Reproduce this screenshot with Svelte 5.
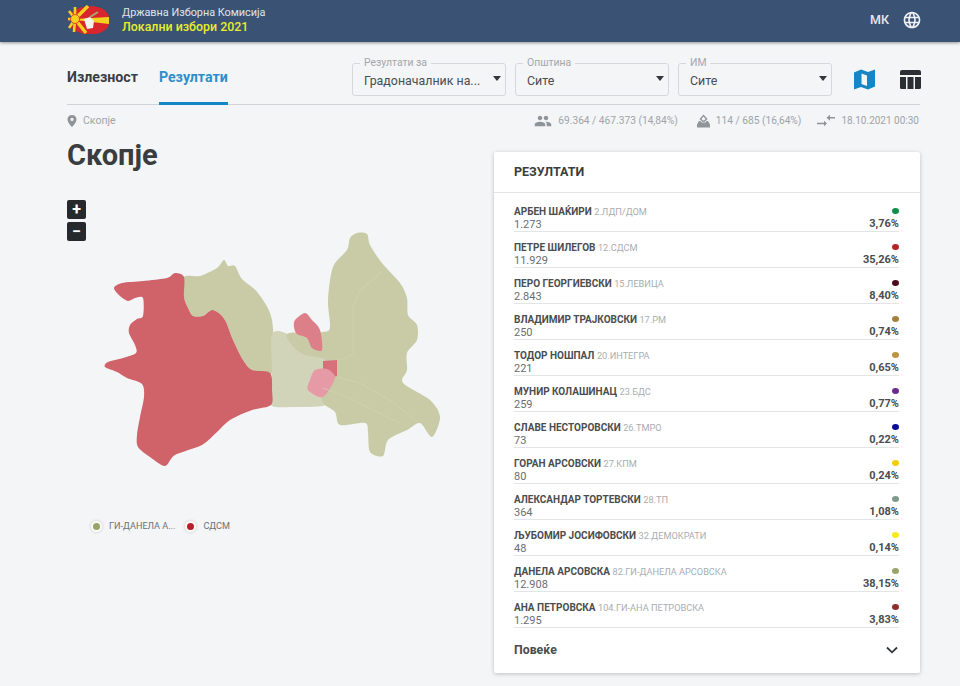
<script>
	const selects = [
		{ label: 'Резултати за', value: 'Градоначалник на...' },
		{ label: 'Општина', value: 'Сите' },
		{ label: 'ИМ', value: 'Сите' }
	];

	const candidates = [
		{ name: 'АРБЕН ШАЌИРИ', party: '2.ЛДП/ДОМ', votes: '1.273', pct: '3,76%', color: '#0c8f4a' },
		{ name: 'ПЕТРЕ ШИЛЕГОВ', party: '12.СДСМ', votes: '11.929', pct: '35,26%', color: '#b8202a' },
		{ name: 'ПЕРО ГЕОРГИЕВСКИ', party: '15.ЛЕВИЦА', votes: '2.843', pct: '8,40%', color: '#4d0a1c' },
		{ name: 'ВЛАДИМИР ТРАЈКОВСКИ', party: '17.РМ', votes: '250', pct: '0,74%', color: '#a3803f' },
		{ name: 'ТОДОР НОШПАЛ', party: '20.ИНТЕГРА', votes: '221', pct: '0,65%', color: '#bb9440' },
		{ name: 'МУНИР КОЛАШИНАЦ', party: '23.БДС', votes: '259', pct: '0,77%', color: '#6a2a8c' },
		{ name: 'СЛАВЕ НЕСТОРОВСКИ', party: '26.ТМРО', votes: '73', pct: '0,22%', color: '#0a0a9c' },
		{ name: 'ГОРАН АРСОВСКИ', party: '27.КПМ', votes: '80', pct: '0,24%', color: '#f2cd0c' },
		{ name: 'АЛЕКСАНДАР ТОРТЕВСКИ', party: '28.ТП', votes: '364', pct: '1,08%', color: '#7f9a8a' },
		{ name: 'ЉУБОМИР ЈОСИФОВСКИ', party: '32.ДЕМОКРАТИ', votes: '48', pct: '0,14%', color: '#f5e81c' },
		{ name: 'ДАНЕЛА АРСОВСКА', party: '82.ГИ-ДАНЕЛА АРСОВСКА', votes: '12.908', pct: '38,15%', color: '#98a46a' },
		{ name: 'АНА ПЕТРОВСКА', party: '104.ГИ-АНА ПЕТРОВСКА', votes: '1.295', pct: '3,83%', color: '#8a2f2a' }
	];

	const regions = [
		{
			fill: '#c9cba6',
			points: '184,277 200,276 217,268 224,260 228,266 235,266 242,279 258,293 272,320 272,373 252,370 243,360 233,340 226,322 220,314 212,310 203,316 193,316 188,308 184,297'
		},
		{ fill: '#c9cba6', points: '318,350 348,350 348,392 318,400', sharp: true },
		{
			fill: '#d2d4b9',
			points: '272,334 287,334 300,353 323,358 325,372 314,383 312,392 325,400 323,406 293,407 272,406 270,393 272,370'
		},
		{
			fill: '#c9cba6',
			points: '357,233 367,234 370,245 382,263 400,283 407,298 408,315 417,325 417,340 407,353 407,370 403,383 430,400 440,417 432,437 420,423 407,430 388,440 383,456 370,452 368,433 365,423 340,425 335,412 323,403 323,390 337,380 337,360 323,358 300,353 287,334 323,332 330,327 328,300 333,267 347,250 350,238'
		},
		{
			fill: '#d0636a',
			points: '114,288 122,283 143,281 167,278 175,273 184,277 184,297 188,308 193,316 203,316 212,310 220,314 226,322 233,340 243,360 252,370 270,373 272,390 271,405 252,410 230,420 217,432 202,445 175,455 165,466 150,457 138,447 137,435 140,417 144,397 142,384 127,378 117,372 105,367 108,362 123,358 136,353 135,345 129,333 130,325 137,319 143,316 143,298 135,298 128,301 120,296'
		},
		{ fill: '#dc7f88', points: '295,320 305,313 312,320 320,330 322,350 312,348 307,338 297,334 294,327' },
		{ fill: '#d8707c', points: '323,361 337,360 337,376 330,378 323,372', sharp: true },
		{ fill: '#e59aa5', points: '315,370 327,369 335,378 323,397 308,390 310,380' }
	];

	const seams = [
		'382,272 360,290 353,307 353,353 347,358 337,360',
		'337,377 360,383 393,402 417,422',
		'323,388 347,397 373,410 400,423'
	];

	const legend = [
		{ label: 'ГИ-ДАНЕЛА А...', color: '#98a46a' },
		{ label: 'СДСМ', color: '#b8202a' }
	];

	// closed catmull-rom through the traced outline points
	function smooth(points) {
		const p = points.split(' ').map((s) => s.split(',').map(Number));
		const n = p.length;
		let d = `M${p[0][0]} ${p[0][1]}`;
		for (let i = 0; i < n; i++) {
			const [a, b, c, e] = [p[(i + n - 1) % n], p[i], p[(i + 1) % n], p[(i + 2) % n]];
			const c1 = [b[0] + (c[0] - a[0]) / 7, b[1] + (c[1] - a[1]) / 7];
			const c2 = [c[0] - (e[0] - b[0]) / 7, c[1] - (e[1] - b[1]) / 7];
			d += `C${c1[0].toFixed(1)} ${c1[1].toFixed(1)} ${c2[0].toFixed(1)} ${c2[1].toFixed(1)} ${c[0]} ${c[1]}`;
		}
		return d + 'Z';
	}
</script>

<div class="page">
	<header class="topbar">
		<div class="brand">
			<svg class="logo" width="42" height="30" viewBox="0 0 42 30">
				<path d="M3 8 Q10 1 24 1 Q36 2 40 9 Q42 15 40 22 Q34 30 22 29 Q10 30 3 22 Z" fill="#d8262c" />
				<g stroke="#f6d21f" stroke-width="2.6">
					<path d="M7 14 L0 14" />
					<path d="M7 14 L1 6" />
					<path d="M7 14 L7 2" />
					<path d="M7 14 L20 1" stroke-width="3.4" />
					<path d="M7 14 L1 23" />
					<path d="M7 14 L6 27" />
					<path d="M7 14 L18 28" stroke-width="3.4" />
				</g>
				<path d="M7 14 L41 12 L41 19 L7 15 Z" fill="#f6d21f" />
				<circle cx="7" cy="14" r="4.5" fill="#f6d21f" stroke="#d8262c" stroke-width="0.8" />
				<path d="M16 14 L22 12 L26 16 L25 23 L19 24 Z" fill="#f4f1ea" />
				<path d="M22 12 L30 7" stroke="#a3ad74" stroke-width="2" />
			</svg>
			<div class="brand-text">
				<span class="org">Државна Изборна Комисија</span>
				<span class="election">Локални избори 2021</span>
			</div>
		</div>
		<div class="lang">
			<span>МК</span>
			<svg width="20" height="20" viewBox="0 0 24 24" fill="#eef1f5">
				<path d="M11.99 2C6.47 2 2 6.48 2 12s4.47 10 9.99 10C17.52 22 22 17.52 22 12S17.52 2 11.99 2zm6.93 6h-2.95c-.32-1.25-.78-2.45-1.38-3.56 1.84.63 3.37 1.91 4.33 3.56zM12 4.04c.83 1.2 1.48 2.53 1.91 3.96h-3.82c.43-1.43 1.08-2.76 1.91-3.96zM4.26 14C4.1 13.36 4 12.69 4 12s.1-1.36.26-2h3.38c-.08.66-.14 1.32-.14 2 0 .68.06 1.34.14 2H4.26zm.82 2h2.95c.32 1.25.78 2.45 1.38 3.56-1.84-.63-3.37-1.9-4.33-3.56zm2.95-8H5.08c.96-1.66 2.49-2.93 4.33-3.56C8.81 5.55 8.35 6.75 8.03 8zM12 19.96c-.83-1.2-1.48-2.53-1.91-3.96h3.82c-.43 1.43-1.08 2.76-1.91 3.96zM14.34 14H9.66c-.09-.66-.16-1.32-.16-2 0-.68.07-1.35.16-2h4.68c.09.65.16 1.32.16 2 0 .68-.07 1.34-.16 2zm.25 5.56c.6-1.11 1.06-2.31 1.38-3.56h2.95c-.96 1.65-2.49 2.93-4.33 3.56zM16.36 14c.08-.66.14-1.32.14-2 0-.68-.06-1.34-.14-2h3.38c.16.64.26 1.31.26 2s-.1 1.36-.26 2h-3.38z" />
			</svg>
		</div>
	</header>

	<main class="content">
		<div class="toolbar">
			<nav class="tabs">
				<span class="tab">Излезност</span>
				<span class="tab active">Резултати</span>
			</nav>
			<div class="filters">
				{#each selects as s}
					<div class="select">
						<span class="select-label">{s.label}</span>
						<span class="select-value">{s.value}</span>
						<span class="caret"></span>
					</div>
				{/each}
				<svg class="view-icon map-icon" width="21" height="21" viewBox="0 0 21 21" fill="#1487c9">
					<path d="M0 3.5 L7 0.5 L14 3 L21 0.5 L21 17.5 L14 20.5 L7 18 L0 20.5 Z M7.5 4.5 L7.5 15 L13 17 L13 6.5 Z" fill-rule="evenodd" />
				</svg>
				<svg class="view-icon table-icon" width="21" height="19" viewBox="0 0 21 19" fill="#2b2f33">
					<path d="M2 0 H19 Q21 0 21 2 V5 H0 V2 Q0 0 2 0 Z" />
					<path d="M0 7 H6 V19 H1.5 Q0 19 0 17.5 Z" />
					<rect x="7.5" y="7" width="6" height="12" />
					<path d="M15 7 H21 V17.5 Q21 19 19.5 19 H15 Z" />
				</svg>
			</div>
		</div>

		<div class="meta">
			<div class="crumb">
				<svg width="10" height="12" viewBox="0 0 10 12" fill="#8f9499">
					<path d="M5 0 C2.2 0 .5 2 .5 4.4 C.5 7.4 5 12 5 12 C5 12 9.5 7.4 9.5 4.4 C9.5 2 7.8 0 5 0 Z M5 6 A1.6 1.6 0 1 1 5 2.8 A1.6 1.6 0 0 1 5 6 Z" fill-rule="evenodd" />
				</svg>
				<span>Скопје</span>
			</div>
			<div class="stats">
				<div class="stat">
					<svg width="18" height="18" viewBox="0 0 24 24" fill="#8f9499">
						<path d="M16 11c1.66 0 2.99-1.34 2.99-3S17.66 5 16 5c-1.66 0-3 1.34-3 3s1.34 3 3 3zm-8 0c1.66 0 2.99-1.34 2.99-3S9.66 5 8 5C6.34 5 5 6.34 5 8s1.34 3 3 3zm0 2c-2.33 0-7 1.17-7 3.5V19h14v-2.5c0-2.33-4.67-3.5-7-3.5zm8 0c-.29 0-.62.02-.97.05 1.16.84 1.97 1.97 1.97 3.45V19h6v-2.5c0-2.33-4.67-3.5-7-3.5z" />
					</svg>
					<span>69.364 / 467.373 (14,84%)</span>
				</div>
				<div class="stat ballot">
					<svg width="13" height="14" viewBox="0 0 13 14" fill="#8f9499">
						<path d="M6.5 0.5 L10.5 5 L7.5 8 H5.5 L2.5 5 Z M6.5 2.4 L4.4 5 L6 6.6 H7 L8.6 5 Z" fill-rule="evenodd" />
						<path d="M2 7 H3.4 L4.6 8.6 H8.4 L9.6 7 H11 L13 10.5 V13.5 H0 V10.5 Z" />
					</svg>
					<span>114 / 685 (16,64%)</span>
				</div>
				<div class="stat">
					<svg width="18" height="13" viewBox="0 0 18 13" fill="#8f9499">
						<path d="M9.5 3.8 L13 0.8 V3 H18 V4.6 H13 V6.8 Z" />
						<path d="M10 9.5 L7 6.8 V8.7 H0 V10.3 H7 V12.2 Z" />
					</svg>
					<span class="date">18.10.2021 00:30</span>
				</div>
			</div>
		</div>

		<div class="columns">
			<section class="left">
				<h1>Скопје</h1>
				<div class="map-wrap">
					<div class="zoom">
						<button>+</button>
						<button>−</button>
					</div>
					<svg class="map" width="427" height="331" viewBox="67 190 427 331">
						{#each regions as r}
							{#if r.sharp}
								<polygon points={r.points} fill={r.fill} />
							{:else}
								<path d={smooth(r.points)} fill={r.fill} />
							{/if}
						{/each}
						{#each seams as s}
							<polyline points={s} fill="none" stroke="#d0d2b4" stroke-width="0.8" stroke-linejoin="round" />
						{/each}
					</svg>
				</div>
				<div class="legend">
					{#each legend as l}
						<div class="legend-item">
							<span class="legend-dot" style="background: {l.color}"></span>
							<span>{l.label}</span>
						</div>
					{/each}
				</div>
			</section>

			<section class="card">
				<h2>РЕЗУЛТАТИ</h2>
				<div class="rows">
					{#each candidates as c}
						<div class="row">
							<div class="who">
								<div class="line"><b>{c.name}</b> <span class="party">{c.party}</span></div>
								<div class="votes">{c.votes}</div>
							</div>
							<div class="score">
								<span class="dot" style="background: {c.color}"></span>
								<b>{c.pct}</b>
							</div>
						</div>
					{/each}
				</div>
				<div class="more">
					<span>Повеќе</span>
					<svg width="12" height="8" viewBox="0 0 12 8" fill="none" stroke="#33373b" stroke-width="1.8">
						<path d="M1 1.5 L6 6.3 L11 1.5" />
					</svg>
				</div>
			</section>
		</div>
	</main>
</div>

<style>
	:global(body) {
		margin: 0;
		background: #f3f5f7;
		font-family: Roboto, "Liberation Sans", sans-serif;
		color: #3a3d40;
	}

	.page {
		height: 686px;
		overflow: hidden;
	}

	.topbar {
		height: 42px;
		box-sizing: border-box;
		padding: 0 38px 3px 68px;
		display: flex;
		align-items: center;
		justify-content: space-between;
		background: #3a5273;
		box-shadow: 0 1px 3px rgba(0, 0, 0, 0.4);
	}

	.brand {
		display: flex;
		align-items: center;
		gap: 12px;
	}

	.logo {
		display: block;
	}

	.brand-text {
		display: flex;
		flex-direction: column;
		line-height: 13.5px;
	}

	.org {
		font-size: 10.85px;
		color: #dfe4ea;
	}

	.election {
		font-size: 12.4px;
		font-weight: 500;
		color: #e6ee2e;
	}

	.lang {
		display: flex;
		align-items: center;
		gap: 13px;
		font-size: 12.5px;
		font-weight: 500;
		color: #e4e8ee;
	}

	.lang svg {
		display: block;
	}

	.content {
		padding: 0 40px 0 67px;
	}

	.toolbar {
		height: 62px;
		display: flex;
		justify-content: space-between;
		align-items: flex-end;
		border-bottom: 1px solid #cfd4d9;
	}

	.tabs {
		display: flex;
		gap: 21px;
	}

	.tab {
		height: 45px;
		box-sizing: border-box;
		margin-bottom: -1px;
		padding-top: 9px;
		font-size: 14.2px;
		font-weight: 700;
		color: #3a3d40;
	}

	.tab.active {
		color: #2c8fc9;
		border-bottom: 3px solid #1487c9;
	}

	.filters {
		display: flex;
		gap: 9px;
		align-items: center;
		padding-bottom: 8px;
	}

	.select {
		position: relative;
		width: 154px;
		height: 33px;
		box-sizing: border-box;
		padding: 9px 11px 0;
		border: 1px solid #d5d9dd;
		border-radius: 3px;
		font-size: 12.4px;
		color: #4a4d50;
	}

	.select-label {
		position: absolute;
		top: -7px;
		left: 7px;
		padding: 0 4px;
		background: #f3f5f7;
		font-size: 10.4px;
		line-height: 12px;
		color: #a3a7ab;
	}

	.select-value {
		display: block;
		line-height: 16px;
	}

	.caret {
		position: absolute;
		top: 12px;
		right: 4px;
		border-left: 4.5px solid transparent;
		border-right: 4.5px solid transparent;
		border-top: 5px solid #33373b;
	}

	.view-icon {
		display: block;
	}

	.map-icon {
		margin-left: 13px;
		margin-right: 16px;
	}

	.table-icon {
		margin-right: -1px;
	}

	.meta {
		height: 29px;
		box-sizing: border-box;
		padding: 2px 1px 0 0;
		display: flex;
		justify-content: space-between;
		align-items: center;
		font-size: 10.2px;
		color: #a0a4a8;
	}

	.crumb,
	.stat,
	.stats {
		display: flex;
		align-items: center;
	}

	.crumb {
		gap: 6px;
		font-size: 10.5px;
	}

	.stats {
		gap: 16px;
	}

	.stat {
		gap: 6px;
	}

	.stat.ballot {
		margin-left: 3px;
	}

	.date {
		font-size: 10px;
	}

	.stat svg,
	.crumb svg {
		display: block;
	}

	.columns {
		display: flex;
		justify-content: space-between;
	}

	.left {
		width: 427px;
	}

	h1 {
		margin: 0;
		height: 56px;
		font-size: 29px;
		line-height: 42px;
		font-weight: 700;
		color: #3a3d40;
	}

	.map-wrap {
		position: relative;
		height: 331px;
	}

	.map {
		display: block;
	}

	.zoom {
		position: absolute;
		top: 10px;
		left: 0;
		display: flex;
		flex-direction: column;
		gap: 3px;
	}

	.zoom button {
		width: 19px;
		height: 19px;
		padding: 0;
		border: none;
		border-radius: 2px;
		background: #26292c;
		color: #fff;
		font-family: inherit;
		font-size: 16px;
		font-weight: 700;
		line-height: 19px;
	}

	.legend {
		display: flex;
		gap: 12px;
		padding-left: 26px;
		font-size: 9.1px;
		color: #6d7175;
	}

	.legend-item {
		display: flex;
		align-items: center;
		gap: 9px;
	}

	.legend-dot {
		width: 7px;
		height: 7px;
		border-radius: 50%;
		box-shadow: 0 0 0 2px #fbfbf6, 0 0 3px 3px rgba(0, 0, 0, 0.1);
	}

	.card {
		width: 426px;
		height: 521px;
		margin-top: 18px;
		box-sizing: border-box;
		background: #fff;
		border-radius: 2px;
		box-shadow: 0 1px 4px rgba(0, 0, 0, 0.22);
	}

	h2 {
		margin: 0;
		height: 40px;
		padding: 0 20px;
		line-height: 40px;
		font-size: 12.5px;
		font-weight: 700;
		color: #3a3d40;
		border-bottom: 1px solid #e2e5e8;
	}

	.rows {
		padding: 3px 21px 0 20px;
	}

	.row {
		height: 36px;
		box-sizing: border-box;
		padding-top: 9px;
		display: flex;
		justify-content: space-between;
		border-bottom: 1px solid #e2e5e8;
	}

	.line {
		font-size: 10px;
		line-height: 13px;
	}

	.line b {
		font-weight: 700;
		color: #4a4d50;
	}

	.party {
		font-size: 9.2px;
		color: #a9adb1;
	}

	.votes {
		font-size: 11px;
		line-height: 14px;
		color: #6a6e72;
	}

	.score {
		display: flex;
		flex-direction: column;
		align-items: flex-end;
		font-size: 11px;
		line-height: 14px;
		color: #4a4d50;
	}

	.dot {
		width: 7px;
		height: 7px;
		margin: 3px 0;
		border-radius: 50%;
	}

	.more {
		display: flex;
		justify-content: space-between;
		align-items: center;
		padding: 15px 22px 0 20px;
		font-size: 12.3px;
		font-weight: 700;
		color: #4a4d50;
	}
</style>
